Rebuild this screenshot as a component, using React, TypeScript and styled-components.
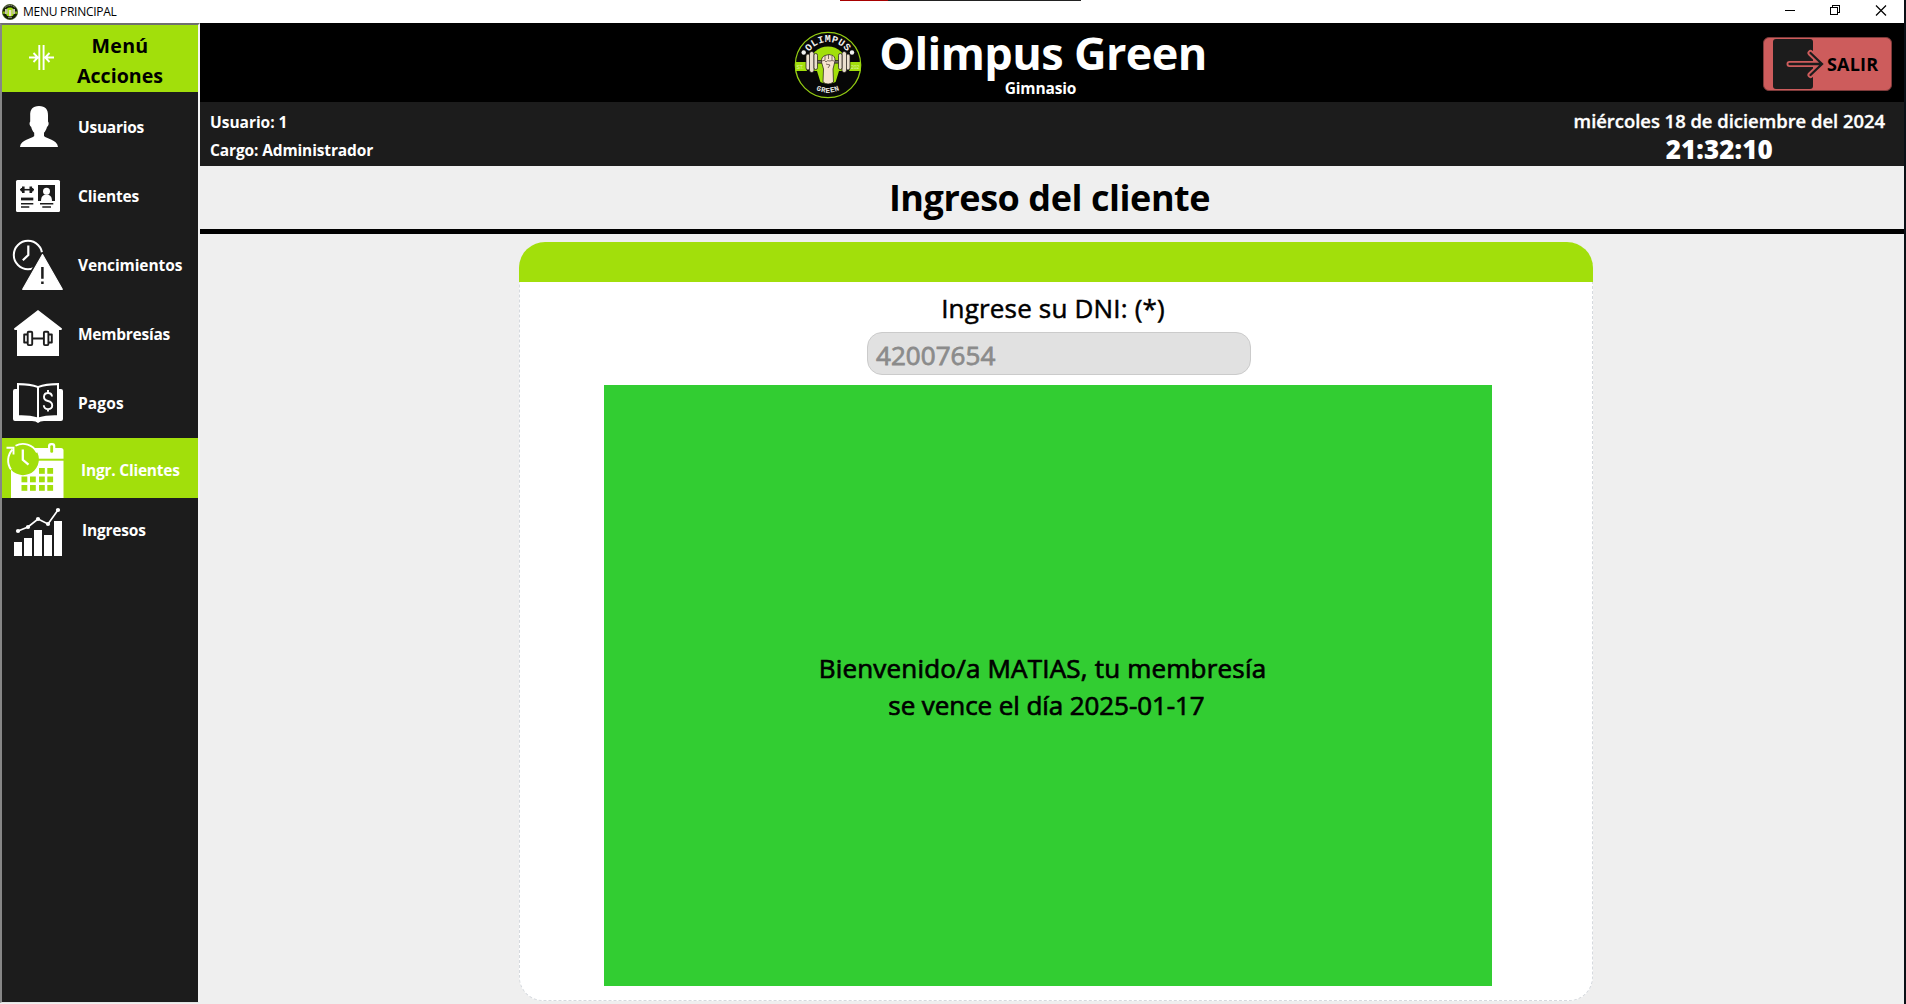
import React from 'react';
import styled, { createGlobalStyle } from 'styled-components';

const GREEN = '#a2df0b';
const DARK = '#1c1c1c';

const Global = createGlobalStyle`
  * { box-sizing: border-box; }
  body { margin: 0; background: #efefef; font-family: "Open Sans", "Noto Sans", sans-serif; }
`;

const Window = styled.div`
  position: relative;
  width: 1906px;
  height: 1004px;
  display: grid;
  grid-template-rows: 23px 1fr;
  border-right: 2px solid #0a1016;
  overflow: hidden;
`;

const TopStrip = styled.div`
  position: absolute;
  top: 0;
  left: 840px;
  width: 241px;
  height: 1px;
  background: linear-gradient(90deg, #a80000 48px, #222 48px);
`;

const TitleBar = styled.header`
  display: flex;
  align-items: center;
  justify-content: space-between;
  background: #fff;
  padding-left: 2px;
`;

const TitleLeft = styled.div`
  display: flex;
  align-items: center;
  gap: 5px;
`;

const Text = styled.span<{ $size: number; $weight?: number; $ls?: number; $line?: number; $color?: string; $stroke?: number }>`
  display: block;
  white-space: nowrap;
  font-size: ${p => p.$size}px;
  font-weight: ${p => p.$weight ?? 700};
  letter-spacing: ${p => p.$ls ?? 0}px;
  line-height: ${p => (p.$line ? `${p.$line}px` : '1.3')};
  color: ${p => p.$color ?? '#fff'};
  -webkit-text-stroke: ${p => p.$stroke ?? 0}px currentColor;
`;

const Body = styled.div`
  display: grid;
  grid-template-columns: 200px 1fr;
  min-height: 0;
`;

const Sidebar = styled.nav`
  display: flex;
  flex-direction: column;
  height: 980px;
  background: ${DARK};
  border-style: solid;
  border-width: 2px 2px 1px 2px;
  border-color: #6f6f6f #f4f4f4 #e3e3e3 #868686;
`;

const MenuHead = styled.div`
  display: grid;
  grid-template-columns: 64px 1fr;
  height: 67px;
  background: ${GREEN};
`;

const MenuTitle = styled.div`
  display: flex;
  flex-direction: column;
  align-items: center;
  padding: 6px 24px 0 0;
`;

const Item = styled.a<{ $h: number; $active?: boolean; $pad: number; $drop?: number }>`
  display: flex;
  align-items: center;
  height: ${p => p.$h}px;
  background: ${p => (p.$active ? GREEN : 'transparent')};
  > span { padding-left: ${p => p.$pad}px; padding-top: ${p => p.$drop ?? 0}px; }
  > svg { flex: none; }
`;

const Main = styled.main`
  display: flex;
  flex-direction: column;
  background: #efefef;
`;

const Banner = styled.div`
  display: flex;
  align-items: center;
  height: 79px;
  background: #000;
  padding: 0 12px 0 594px;
  > svg { margin-top: 4px; }
`;

const Brand = styled.div`
  display: flex;
  flex-direction: column;
  align-items: center;
  width: 340px;
  margin-left: 11px;
  height: 79px;
`;

const Tagline = styled.div`
  padding-right: 5px;
`;

const ExitButton = styled.button`
  display: flex;
  align-items: center;
  width: 129px;
  height: 54px;
  margin: 3px 0 0 auto;
  padding: 0;
  border: 1px solid #7d3a3a;
  border-radius: 6px;
  background: #cd5c5c;
  font-family: inherit;
  > span { padding: 1px 0 0 1px; }
`;

const InfoBar = styled.div`
  display: flex;
  justify-content: space-between;
  height: 64px;
  background: ${DARK};
  padding: 0 19px 0 10px;
`;

const InfoLeft = styled.div`
  padding-top: 7px;
`;

const InfoRight = styled.div`
  display: flex;
  flex-direction: column;
  align-items: center;
  padding-top: 5px;
`;

const Clock = styled.div`
  padding: 1px 20px 0 0;
`;

const Heading = styled.h1`
  margin: 0;
  display: flex;
  justify-content: center;
  height: 68px;
  border-bottom: 5px solid #000;
  padding-right: 5px;
`;

const Card = styled.section`
  width: 1074px;
  height: 759px;
  margin: 8px 0 0 319px;
  display: flex;
  flex-direction: column;
  background: #fff;
  border: 1px dashed #d6dadf;
  border-top: 0;
  border-radius: 26px 26px 24px 24px;
`;

const CardTop = styled.div`
  flex: none;
  height: 40px;
  margin: 0 -1px;
  background: ${GREEN};
  border-radius: 26px 26px 0 0;
`;

const FieldLabel = styled.label`
  display: flex;
  justify-content: center;
  height: 50px;
  padding: 5px 6px 0 0;
`;

const Field = styled.div`
  width: 384px;
  height: 43px;
  margin-left: 347px;
  padding-left: 8px;
  border: 1px solid #cbcbcb;
  border-radius: 15px;
  background: #e1e1e1;
`;

const Result = styled.div`
  width: 888px;
  height: 601px;
  margin: 10px 0 0 84px;
  padding-top: 2px;
  display: flex;
  flex-direction: column;
  justify-content: center;
  align-items: center;
  background: #32cd32;
`;

const MessageLine = styled.div<{ $shift: number }>`
  padding-right: ${p => p.$shift}px;
`;

const GymLogo = ({ size }: { size: number }) => (
  <svg width={size} height={size} viewBox="0 0 68 68">
    <defs>
      <path id="arcTop" d="M11 34 A23 23 0 0 1 57 34" />
      <path id="arcBottom" d="M6.500 34 A27.500 27.500 0 0 0 61.500 34" />
    </defs>
    <circle cx="34" cy="34" r="32.700" fill="#070707" stroke="#93cc12" strokeWidth="1.300" />
    <path d="M1.500 31h65v9h-65z" fill={GREEN} />
    <circle cx="34" cy="34" r="22" fill="#070707" />
    <circle cx="34" cy="34" r="18.600" fill={GREEN} />
    <path d="M8 40h15l4 13h-7zM60 40h-15l-4 13h7z" fill="#070707" />
    <g fill="#eadfce" stroke="#1a1613" strokeWidth=".7">
      <rect x="22" y="29.500" width="24" height="2.600" fill="#77706a" />
      <rect x="12" y="23" width="4" height="16" rx="2" />
      <rect x="15.500" y="20.500" width="4.500" height="21" rx="2.200" />
      <rect x="20" y="22.500" width="3.500" height="16" rx="1.700" />
      <rect x="52" y="23" width="4" height="16" rx="2" />
      <rect x="48" y="20.500" width="4.500" height="21" rx="2.200" />
      <rect x="44.500" y="22.500" width="3.500" height="16" rx="1.700" />
      <path d="M29.500 38 L27.500 31 Q27 26 31 24.500 Q35 22.500 39 24.500 Q42 27 40.500 32 L39 38 L39.500 51 Q34 55 29 51 Z" fill="#f6e3d0" />
      <path d="M28 30q3-2 4 1 1-2 4-1 2-1 4 0M31 25v4M34.500 24v4M38 25v4M32 33l4 1-2 3" fill="none" stroke="#4b3a30" />
    </g>
    <circle cx="9.700" cy="21.500" r="2.200" fill="#f2f2f2" />
    <circle cx="58" cy="21.500" r="2.200" fill="#f2f2f2" />
    <text fill="#f0f0ec" fontFamily="Liberation Mono, monospace" fontWeight="700" fontSize="10" letterSpacing=".3">
      <textPath href="#arcTop" startOffset="50%" textAnchor="middle">OLIMPUS</textPath>
    </text>
    <text fill="#e8e8e4" fontFamily="Liberation Mono, monospace" fontWeight="700" fontSize="7.500" letterSpacing=".4">
      <textPath href="#arcBottom" startOffset="50%" textAnchor="middle">GREEN</textPath>
    </text>
    <text x="2.500" y="37.500" fontSize="5" fill="#dff3a8" fontFamily="Liberation Sans, sans-serif">ST.</text>
    <text x="57" y="37.500" fontSize="5" fill="#dff3a8" fontFamily="Liberation Sans, sans-serif">202</text>
  </svg>
);

const MiniLogo = () => (
  <svg width="16" height="16" viewBox="0 0 16 16">
    <circle cx="8" cy="8" r="7.600" fill="#16200a" stroke="#33480c" strokeWidth=".7" />
    <path d="M.6 7.500h14.800v2.300H.6z" fill="#86b516" />
    <circle cx="8" cy="8" r="4.500" fill={GREEN} />
    <path d="M3 3.600a7 7 0 0 1 10 0" fill="none" stroke="#a8a8a0" strokeDasharray="1.200 .8" />
    <path d="M3.600 5v5M5 5v5M11 5v5M12.400 5v5" stroke="#c9c3b4" strokeWidth="1.200" />
    <path d="M6.800 6h2.600v6H7z" fill="#eadcc8" />
    <path d="M6 13.600h4" stroke="#9a9a94" strokeWidth=".9" />
  </svg>
);

const CollapseIcon = () => (
  <svg width="64" height="67" viewBox="2 25 64 67" fill="none" stroke="#fff" strokeWidth="1.900">
    <path d="M39.300 45v25M43.600 45v25M29 57.500h8M54 57.500h-8M33.500 53l4.300 4.500-4.300 4.500M49.500 53l-4.300 4.500 4.300 4.500" />
  </svg>
);

const UserIcon = () => (
  <svg width="64" height="69" viewBox="2 92 64 69" fill="#fff">
    <path d="M39 106c6.500 0 9.200 3.600 9 9.500v6c1.200 1 .8 4.500-1 5.500-.6 2.500-1.800 4.500-3 5.800v3.200c2 2.600 13.500 3.500 14 11H20c.5-7.500 12-8.400 14.200-11v-3.200c-1.400-1.300-2.400-3.300-3-5.800-1.800-1-2.200-4.500-1-5.500v-6c-.2-5.900 2.300-9.500 8.800-9.500z" />
  </svg>
);

const ClientsIcon = () => (
  <svg width="64" height="69" viewBox="2 161 64 69">
    <rect x="16" y="180" width="44" height="32" rx="1.500" fill="#fff" />
    <rect x="38" y="185" width="17" height="16" fill={DARK} />
    <circle cx="46.500" cy="191.200" r="3.500" fill="#fff" />
    <path d="M41 201.500c0-5 2-7 5.500-7s5.500 2 5.500 7z" fill="#fff" />
    <g stroke={DARK} fill="none">
      <path d="M20 189.700h14" strokeWidth="1.600" />
      <path d="M23.300 186.500v6.400M30.800 186.500v6.400" strokeWidth="2.600" />
      <path d="M21.500 188v3.400M32.600 188v3.400" strokeWidth="1.200" />
      <path d="M21 199h12.300" strokeWidth="2.800" />
      <path d="M21 203.700h12.300M21 207h8.300M40 203.700h13.300M42.300 207h8.700" strokeWidth="1.400" />
    </g>
  </svg>
);

const ExpiryIcon = () => (
  <svg width="64" height="69" viewBox="2 230 64 69">
    <circle cx="28" cy="255" r="14.200" fill="none" stroke="#fff" strokeWidth="2" />
    <path d="M28.300 245.500v9.500l-5.500 5.300" fill="none" stroke="#fff" strokeWidth="2.200" />
    <path d="M42.500 254L62.500 289.300H22.500z" fill="#fff" stroke={DARK} strokeWidth="4" strokeLinejoin="round" />
    <path d="M42.500 254.500L62.300 289.300H22.700z" fill="#fff" stroke="#fff" strokeWidth="1.200" strokeLinejoin="round" />
    <path d="M42.400 267v11.800M42.400 281.500v2.400" stroke={DARK} strokeWidth="2.500" />
  </svg>
);

const HouseIcon = () => (
  <svg width="64" height="69" viewBox="2 299 64 69">
    <path d="M38 310L62 328.500l-.5 1.500H59v26H17v-26h-2.500L14 328.500z" fill="#fff" />
    <g fill="none" stroke={DARK} strokeWidth="1.900" strokeLinejoin="round">
      <path d="M27.500 334.500h-3.300v8h3.300M48.500 334.500h3.300v8h-3.300M32.500 338.500h11" />
      <rect x="27.700" y="331.700" width="4.500" height="13.400" rx="1" />
      <rect x="43.900" y="331.700" width="4.500" height="13.400" rx="1" />
    </g>
  </svg>
);

const BookIcon = () => (
  <svg width="64" height="70" viewBox="2 368 64 70">
    <path d="M17 389h-2q-2 0-2 2v28q0 2 2 2h17q4 0 6 2 2-2 6-2h17q2 0 2-2v-28q0-2-2-2h-2v-6q-14 0-21 3-7-3-21-3z" fill="#fff" />
    <path d="M19 385.300q12 0 18 2.500v29.400q-7-2.300-18-2z M39 387.800q6-2.500 18-2.500v29.900q-11-.3-18 2z" fill={DARK} />
    <path d="M52 396.500q-.3-3.500-4-3.500t-4 3.500 4 4.500q4.200 1 4.200 4.500t-4.200 3.600q-4 0-4.200-3.800M48 390v3M48 409v2.500" fill="none" stroke="#fff" strokeWidth="1.900" />
  </svg>
);

const cells = [[39, 468], [47.3, 468], ...[476.5, 485].flatMap(y => [21.5, 30, 39, 47.3].map(x => [x, y]))];

const CalendarIcon = () => (
  <svg width="64" height="60" viewBox="2 438 64 60">
    <path d="M11 448h50q2.500 0 2.500 2.500V498H11z" fill="#fff" />
    <path d="M38 459.700h26" stroke={GREEN} strokeWidth="2" />
    <rect x="48" y="443" width="7.300" height="11" rx="3" fill="#fff" />
    <rect x="50.300" y="445.300" width="2.800" height="7.500" rx="1.200" fill={GREEN} />
    <path d="M15.500 445.500A15.800 15.800 0 1 1 8 464L6.500 447z" fill={GREEN} />
    <circle cx="23" cy="459.500" r="14.200" fill={GREEN} />
    <path d="M15.500 445.800A15.800 15.800 0 0 1 37 452.500" fill="none" stroke="#fff" strokeWidth="1.800" />
    <path d="M12.500 449.500A15.800 15.800 0 0 0 11 469.500" fill="none" stroke="#fff" strokeWidth="1.900" />
    <path d="M6.500 447.800h7v6.700" fill="none" stroke="#fff" strokeWidth="1.900" />
    <path d="M22.800 449.500v10.300l5.700 4.800" fill="none" stroke="#fff" strokeWidth="2.300" />
    {cells.map(([x, y]) => <rect key={`${x}-${y}`} x={x} y={y} width="5.800" height="5.800" fill={GREEN} />)}
  </svg>
);

const ChartIcon = () => (
  <svg width="64" height="62" viewBox="2 498 64 62" fill="#fff">
    <path d="M14 542h8v14h-8zM24 538h8v18h-8zM34 530h8v26h-8zM44 535h8v21h-8zM54 521h8v35h-8z" />
    <path d="M18 531l10-4 10-8 10 5 10-14" fill="none" stroke="#fff" strokeWidth="1.700" />
    {[[18, 531], [28, 527], [38, 519], [48, 524], [58, 510]].map(([x, y]) => <circle key={x} cx={x} cy={y} r="2.100" />)}
  </svg>
);

const ExitIcon = () => (
  <svg width="62" height="52" viewBox="1764 38 62 52">
    <rect x="1773" y="39" width="40" height="50" rx="3" fill={DARK} />
    <path d="M1789.500 64h31M1810.500 53l11.500 11-11.500 11" fill="none" stroke="#cd5c5c" strokeWidth="6" strokeLinecap="round" />
    <path d="M1789.500 64h32M1810.500 53l11.500 11-11.500 11" fill="none" stroke={DARK} strokeWidth="2.300" strokeLinecap="round" />
  </svg>
);

const WindowButtons = () => (
  <svg width="124" height="23" viewBox="1780 0 124 23" fill="none" stroke="#000" shapeRendering="crispEdges">
    <path d="M1785 10.500h10M1830.500 7.500h7v7h-7zM1832.500 7v-1.500h7v7h-1.500" />
    <path d="M1876 5.500l10 10M1886 5.500l-10 10" shapeRendering="auto" strokeWidth="1.200" />
  </svg>
);

const items = [
  { label: 'Usuarios', icon: <UserIcon />, h: 69, pad: 12, ls: -0.25, drop: 1 },
  { label: 'Clientes', icon: <ClientsIcon />, h: 69, pad: 12, ls: -0.14, drop: 2 },
  { label: 'Vencimientos', icon: <ExpiryIcon />, h: 69, pad: 12, ls: -0.1, drop: 1 },
  { label: 'Membresías', icon: <HouseIcon />, h: 69, pad: 12, ls: -0.25, drop: 1 },
  { label: 'Pagos', icon: <BookIcon />, h: 70, pad: 12, ls: 0.12, drop: 1 },
  { label: 'Ingr. Clientes', icon: <CalendarIcon />, h: 60, pad: 15, ls: -0.22, drop: 5, active: true },
  { label: 'Ingresos', icon: <ChartIcon />, h: 62, pad: 16, ls: -0.2, drop: 3 },
];

export default function App() {
  return (
    <Window>
      <Global />
      <TitleBar>
        <TitleLeft>
          <MiniLogo />
          <Text $size={12} $weight={400} $ls={-0.27} $color="#000">MENU PRINCIPAL</Text>
        </TitleLeft>
        <WindowButtons />
      </TitleBar>
      <TopStrip />
      <Body>
        <Sidebar>
          <MenuHead>
            <CollapseIcon />
            <MenuTitle>
              <Text $size={19.6} $line={30} $ls={0.3} $color="#000">Menú</Text>
              <Text $size={19.6} $line={30} $color="#000">Acciones</Text>
            </MenuTitle>
          </MenuHead>
          {items.map(i => (
            <Item key={i.label} $h={i.h} $pad={i.pad} $active={i.active} $drop={i.drop}>
              {i.icon}
              <Text $size={15.5} $ls={i.ls}>{i.label}</Text>
            </Item>
          ))}
        </Sidebar>
        <Main>
          <Banner>
            <GymLogo size={68} />
            <Brand>
              <Text $size={45} $ls={-0.6} $line={59}>Olimpus Green</Text>
              <Tagline>
                <Text $size={15.5} $ls={-0.15} $line={13}>Gimnasio</Text>
              </Tagline>
            </Brand>
            <ExitButton>
              <ExitIcon />
              <Text $size={18} $ls={0.2} $color="#000">SALIR</Text>
            </ExitButton>
          </Banner>
          <InfoBar>
            <InfoLeft>
              <Text $size={15.5} $line={27} $ls={-0.02}>Usuario: 1</Text>
              <Text $size={15.5} $line={28} $ls={-0.13}>Cargo: Administrador</Text>
            </InfoLeft>
            <InfoRight>
              <Text $size={18.4} $weight={600} $line={28} $stroke={0.35}>miércoles 18 de diciembre del 2024</Text>
              <Clock>
                <Text $size={26} $weight={800} $line={27} $ls={0.1}>21:32:10</Text>
              </Clock>
            </InfoRight>
          </InfoBar>
          <Heading>
            <Text $size={36} $line={63} $ls={-0.45} $color="#000">Ingreso del cliente</Text>
          </Heading>
          <Card>
            <CardTop />
            <FieldLabel>
              <Text $size={26} $weight={400} $line={43} $ls={0.18} $color="#000" $stroke={0.5}>Ingrese su DNI: (*)</Text>
            </FieldLabel>
            <Field>
              <Text $size={26} $weight={400} $line={45} $ls={0.05} $color="#8b8b8b" $stroke={0.8}>42007654</Text>
            </Field>
            <Result>
              <MessageLine $shift={11}>
                <Text $size={26} $weight={400} $line={37} $ls={0.2} $color="#000" $stroke={0.7}>Bienvenido/a MATIAS, tu membresía</Text>
              </MessageLine>
              <MessageLine $shift={3}>
                <Text $size={26} $weight={400} $line={37} $ls={-0.08} $color="#000" $stroke={0.7}>se vence el día 2025-01-17</Text>
              </MessageLine>
            </Result>
          </Card>
        </Main>
      </Body>
    </Window>
  );
}
